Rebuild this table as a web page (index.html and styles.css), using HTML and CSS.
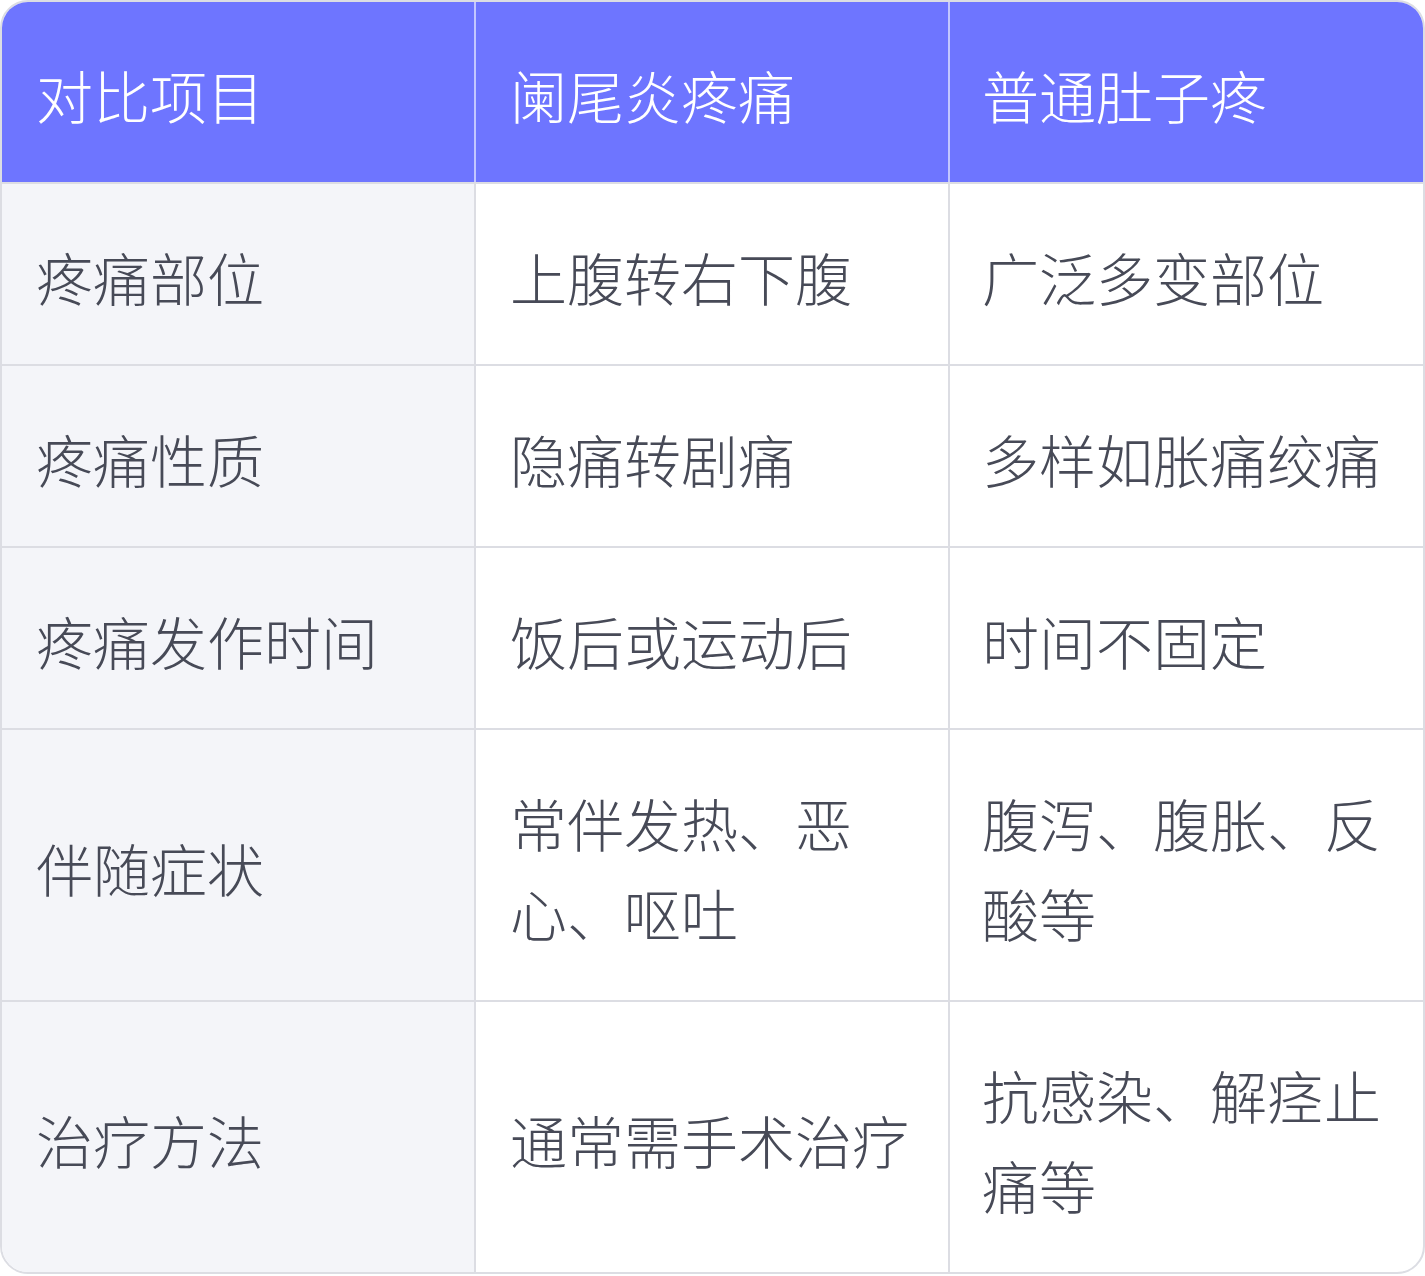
FILE: index.html
```html
<!DOCTYPE html>
<html lang="zh-CN">
<head>
<meta charset="utf-8">
<link rel="stylesheet" href="styles.css">
</head>
<body>
<div class="tbl">
  <div class="row head">
    <div class="cell">对比项目</div>
    <div class="cell">阑尾炎疼痛</div>
    <div class="cell">普通肚子疼</div>
  </div>
  <div class="row">
    <div class="cell first">疼痛部位</div>
    <div class="cell">上腹转右下腹</div>
    <div class="cell">广泛多变部位</div>
  </div>
  <div class="row">
    <div class="cell first">疼痛性质</div>
    <div class="cell">隐痛转剧痛</div>
    <div class="cell">多样如胀痛绞痛</div>
  </div>
  <div class="row">
    <div class="cell first">疼痛发作时间</div>
    <div class="cell">饭后或运动后</div>
    <div class="cell">时间不固定</div>
  </div>
  <div class="row">
    <div class="cell first">伴随症状</div>
    <div class="cell">常伴发热、恶心、呕吐</div>
    <div class="cell">腹泻、腹胀、反酸等</div>
  </div>
  <div class="row last">
    <div class="cell first">治疗方法</div>
    <div class="cell">通常需手术治疗</div>
    <div class="cell">抗感染、解痉止痛等</div>
  </div>
</div>
</body>
</html>
```

FILE: styles.css
```css
html, body {
  margin: 0;
  padding: 0;
  background: #ffffff;
}
body {
  font-family: "Noto Sans CJK SC", "Noto Sans", sans-serif;
  font-weight: 300;
}
.tbl {
  width: 1425px;
  box-sizing: border-box;
  border: 2px solid #dcdde3;
  border-radius: 28px;
  overflow: hidden;
  background: #ffffff;
}
.row {
  display: grid;
  grid-template-columns: 472px 474px 1fr;
  border-bottom: 2px solid #dcdde3;
}
.row.last {
  border-bottom: none;
}
.cell {
  padding: 47px 34px 43px 34px;
  font-size: 57px;
  line-height: 90px;
  color: #474a57;
  border-left: 2px solid #dcdde3;
  display: flex;
  align-items: center;
}
.cell:first-child {
  border-left: none;
}
.cell:last-child {
  padding-left: 32px;
  padding-right: 30px;
}
.cell.first {
  background: #f4f5f9;
}
.head {
  background: #6e75ff;
}
.head .cell {
  color: #ffffff;
  border-left-color: #c3c6ff;
}
```
